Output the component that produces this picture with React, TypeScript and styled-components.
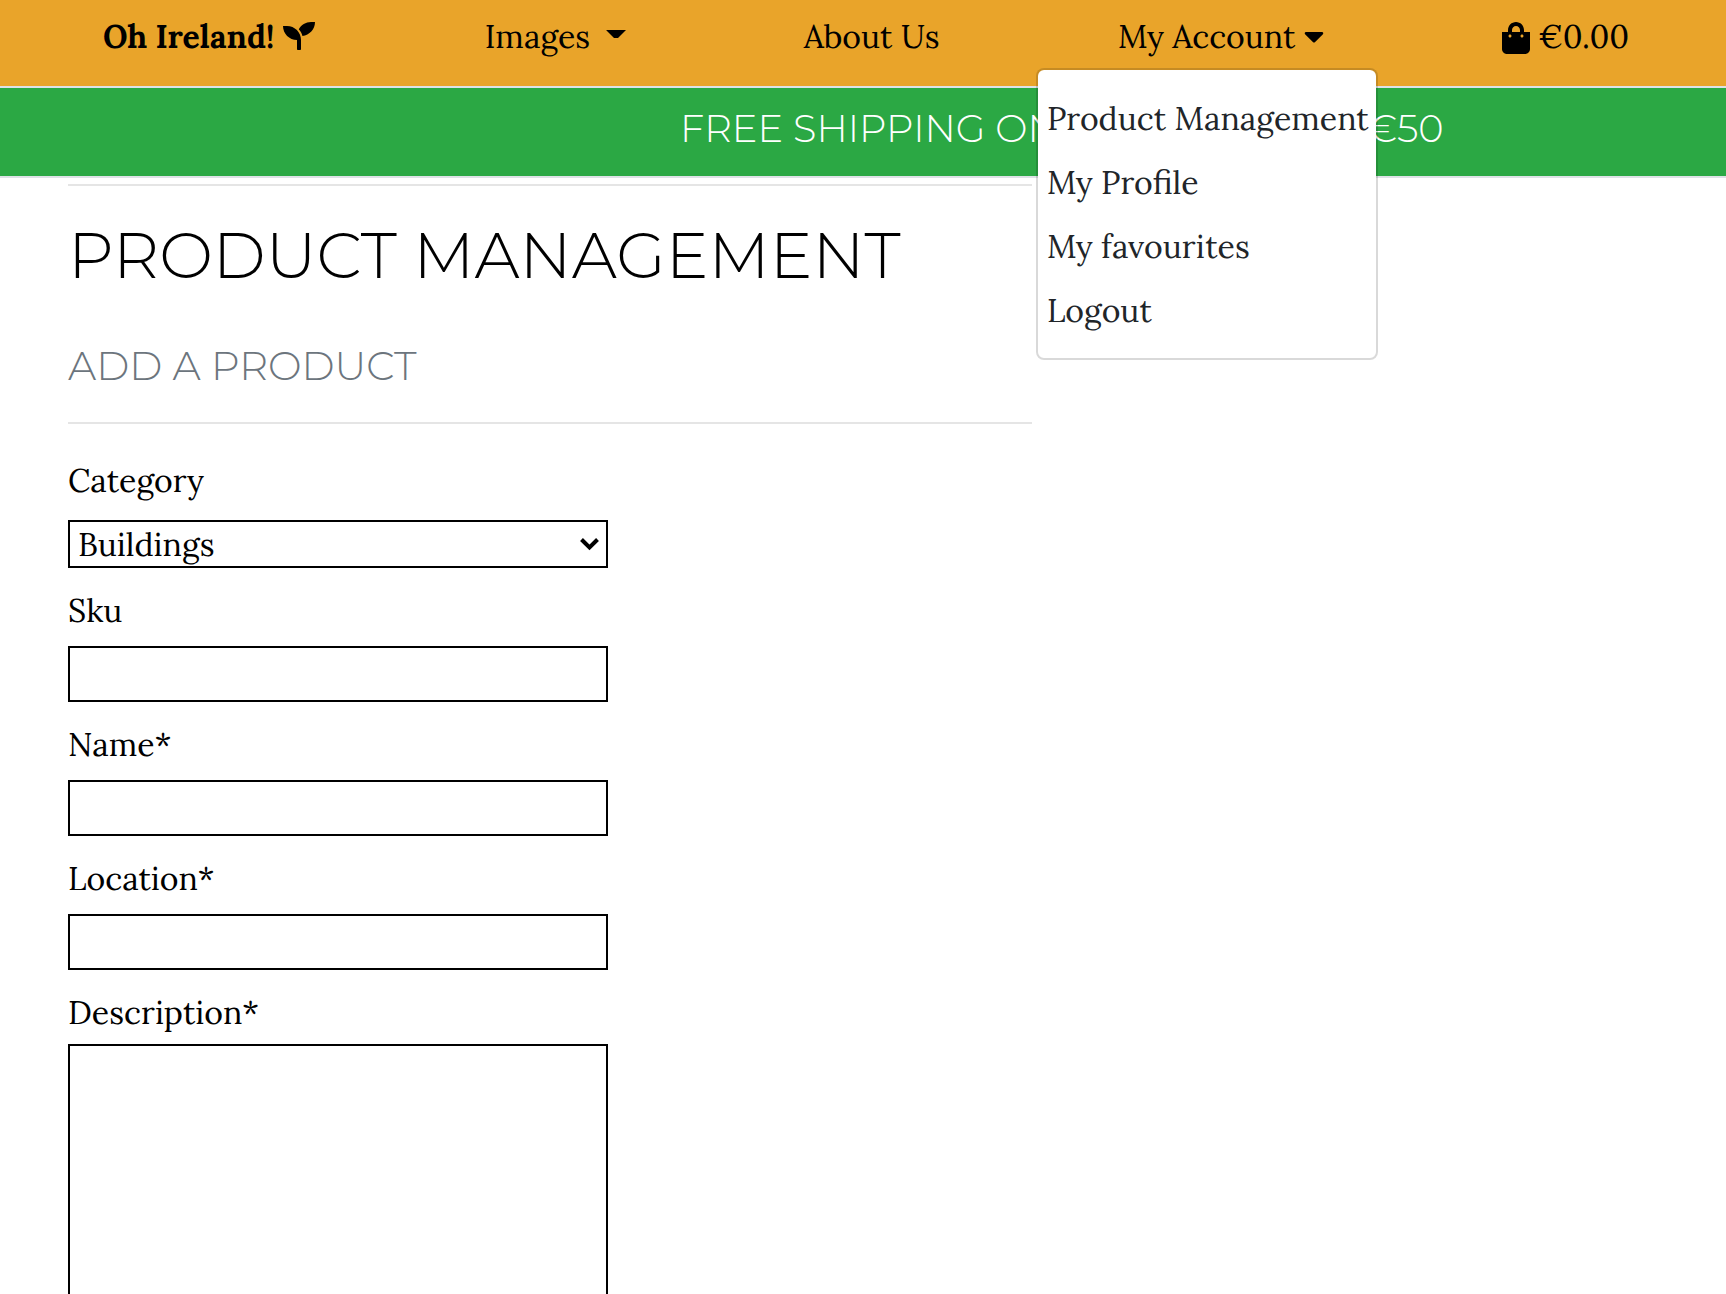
import React from "react";
import styled, { createGlobalStyle } from "styled-components";
import { FaSeedling, FaShoppingBag, FaCaretDown } from "react-icons/fa";

const serif = `Lora, "Liberation Serif", serif`;
const sans = `Montserrat, Lato, sans-serif`;

const GlobalStyle = createGlobalStyle`
  *, *::before, *::after { box-sizing: border-box; }
  html { overflow: hidden; }
  body {
    margin: 0;
    background: #fff;
    color: #000;
    font: 400 32px/50px ${serif};
  }
`;

const Page = styled.div`
  height: 1294px;
  overflow: hidden;
`;

const Nav = styled.nav`
  display: flex;
  height: 88px;
  padding: 12px 0 0 103px;
  background: #e9a42a;
  border-bottom: 2px solid #dee2e6;
`;

const NavItem = styled.div<{ $gap?: number; $bold?: boolean }>`
  position: relative;
  display: flex;
  height: 48px;
  white-space: pre;
  margin-left: ${(p) => p.$gap ?? 0}px;
  font-weight: ${(p) => (p.$bold ? 700 : 400)};
`;

const NavIcon = styled.span<{ $left?: number; $right?: number; $top?: number; $width: number }>`
  display: block;
  height: 32px;
  margin: ${(p) => p.$top ?? 8}px ${(p) => p.$right ?? 0}px 0 ${(p) => p.$left ?? 0}px;

  svg {
    display: block;
    width: ${(p) => p.$width}px;
  }
`;

const Caret = styled.span`
  width: 20px;
  height: 10px;
  margin: 18px 0 0 16px;
  border-top: 10px solid #000;
  border-left: 10px solid transparent;
  border-right: 10px solid transparent;
  clip-path: inset(0 0 2px 0);
`;

const Menu = styled.ul`
  position: absolute;
  z-index: 2;
  top: 56px;
  right: -53.5px;
  width: 342px;
  margin: 0;
  padding: 16px 0;
  list-style: none;
  background: #fff;
  background-clip: padding-box;
  border: 2px solid rgba(0, 0, 0, 0.15);
  border-radius: 8px;
`;

const MenuItem = styled.li`
  height: 64px;
  padding: 8px 8px 8px 9px;
  color: #212529;
`;

const Banner = styled.div`
  height: 90px;
  padding: 17px 0 0 680px;
  background: #2ba844;
  border-bottom: 2px solid #dee2e6;
  color: #fff;
  font: 340 38.4px/48px ${sans};
  white-space: nowrap;
`;

const Content = styled.main`
  width: 964px;
  margin: 6px 0 0 68px;
`;

const Rule = styled.hr`
  height: 2px;
  margin: 0;
  border: 0;
  background: #e5e5e5;
`;

const Title = styled.h2`
  margin: 31px 0 48px;
  font: 310 64px/76.8px ${sans};
  white-space: nowrap;
`;

const Subtitle = styled.h5`
  margin: 0 0 32px;
  color: #6c757d;
  font: 320 40px/48px ${sans};
`;

const Form = styled.form`
  display: flex;
  flex-direction: column;
  width: 540px;
  margin-top: 32px;
`;

const Label = styled.label<{ $gap?: number }>`
  height: 48px;
  margin-bottom: ${(p) => p.$gap ?? 12}px;
`;

const Input = styled.input`
  height: 56px;
  margin: 0 0 18px;
  padding: 0 8px;
  border: 2px solid #000;
  border-radius: 0;
  background: #fff;
  font: inherit;
`;

const Select = styled.div`
  display: flex;
  justify-content: space-between;
  height: 48px;
  margin-bottom: 18px;
  padding: 0 7px 0 8px;
  border: 2px solid #000;
  line-height: 46px;

  svg { margin-top: 15px; }
`;

const TextArea = styled.textarea`
  height: 480px;
  border: 2px solid #000;
  border-radius: 0;
  background: #fff;
  resize: none;
`;

const menuItems = ["Product Management", "My Profile", "My favourites", "Logout"];
const fields = ["Sku", "Name*", "Location*"];

export default function App() {
  return (
    <Page>
      <GlobalStyle />
      <Nav>
        <NavItem $bold>
          Oh Ireland!
          <NavIcon $left={9} $width={32}><FaSeedling size={32} /></NavIcon>
        </NavItem>
        <NavItem $gap={169.5}>
          Images
          <Caret />
        </NavItem>
        <NavItem $gap={177.5}>About Us</NavItem>
        <NavItem $gap={178.5}>
          My Account
          <NavIcon $left={9} $top={8} $width={20}><FaCaretDown size={32} /></NavIcon>
          <Menu>
            {menuItems.map((item) => <MenuItem key={item}>{item}</MenuItem>)}
          </Menu>
        </NavItem>
        <NavItem $gap={178}>
          <NavIcon $right={8} $top={10} $width={28}><FaShoppingBag size={32} /></NavIcon>
          €0.00
        </NavItem>
      </Nav>
      <Banner>FREE SHIPPING ON ORDERS OVER €50</Banner>
      <Content>
        <Rule />
        <Title>PRODUCT MANAGEMENT</Title>
        <Subtitle>ADD A PRODUCT</Subtitle>
        <Rule />
        <Form>
          <Label $gap={16}>Category</Label>
          <Select>
            Buildings
            <svg width="19" height="15" viewBox="0 0 19 15" fill="none" stroke="#000" strokeWidth="4">
              <path d="M1.500 2.500 9.500 10.500l8-8" />
            </svg>
          </Select>
          {fields.map((field) => (
            <React.Fragment key={field}>
              <Label>{field}</Label>
              <Input />
            </React.Fragment>
          ))}
          <Label $gap={8}>Description*</Label>
          <TextArea />
        </Form>
      </Content>
    </Page>
  );
}
